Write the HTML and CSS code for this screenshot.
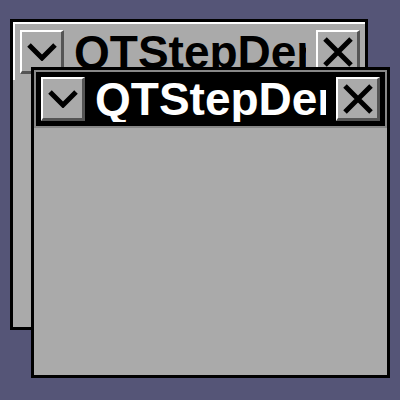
FILE: index.html
```html
<!DOCTYPE html>
<html lang="en">
<head>
    <meta charset="UTF-8">
    <title>QTStepDemo</title>
    <link rel="stylesheet" href="styles.css">
</head>
<body>
    <div class="desktop">
        <div class="window window-back">
            <div class="titlebar">
                <button class="wm-btn">
                    <svg width="30" height="18" viewBox="0 0 30 18"><polyline points="2,2 15,15 28,2" fill="none" stroke="#000" stroke-width="5"/></svg>
                </button>
                <div class="title">QTStepDemo</div>
                <button class="wm-btn">
                    <svg width="30" height="30" viewBox="0 0 30 30"><path d="M2 2 L28 28 M28 2 L2 28" stroke="#000" stroke-width="5"/></svg>
                </button>
            </div>
            <div class="client"></div>
        </div>

        <div class="window window-front">
            <div class="titlebar">
                <button class="wm-btn">
                    <svg width="30" height="18" viewBox="0 0 30 18"><polyline points="2,2 15,15 28,2" fill="none" stroke="#000" stroke-width="5"/></svg>
                </button>
                <div class="title">QTStepDemo</div>
                <button class="wm-btn">
                    <svg width="30" height="30" viewBox="0 0 30 30"><path d="M2 2 L28 28 M28 2 L2 28" stroke="#000" stroke-width="5"/></svg>
                </button>
            </div>
            <div class="client"></div>
        </div>
    </div>
</body>
</html>
```

FILE: styles.css
```css
* {
    margin: 0;
    padding: 0;
    box-sizing: border-box;
}

body {
    background: #555577;
    font-family: 'Liberation Sans', Arial, sans-serif;
}

.desktop {
    position: relative;
    width: 400px;
    height: 400px;
    overflow: hidden;
}

/* windows sit on a free desktop, so they are placed by coordinates */
.window {
    position: absolute;
    width: 358px;
    height: 311px;
    border: 3px solid #000;
    background: #aaa;
    display: flex;
    flex-direction: column;
}

.window-back {
    left: 10px;
    top: 19px;
}

.window-front {
    left: 31px;
    top: 67px;
    width: 359px;
}

.titlebar {
    height: 58px;
    display: flex;
    align-items: center;
    gap: 10px;
    padding: 0 5px;
    border-style: solid;
    border-width: 2px 0 0 2px;
}

.window-back .titlebar {
    background: #aaa;
    border-color: #fff;
    color: #000;
}

.window-front .titlebar {
    background: #000;
    border-color: #888;
    border-width: 2px;
    color: #fff;
}

.title {
    flex: 1;
    font-size: 46px;
    font-weight: bold;
    line-height: 1;
    white-space: nowrap;
    overflow: hidden;
}

.wm-btn {
    width: 44px;
    height: 44px;
    flex: none;
    padding: 0;
    background: #aaa;
    border-style: solid;
    border-width: 2px 3px 3px 2px;
    border-color: #fff #555 #555 #fff;
    display: flex;
    align-items: center;
    justify-content: center;
}

.wm-btn svg {
    display: block;
}

.client {
    flex: 1;
    background: #aaa;
}
```
